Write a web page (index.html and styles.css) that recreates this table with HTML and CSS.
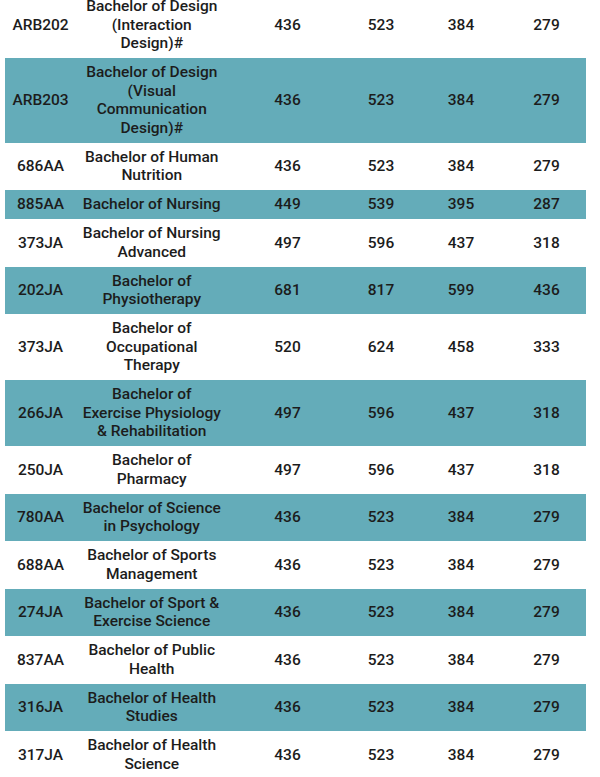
FILE: index.html
```html
<!DOCTYPE html>
<html lang="en">
<head>
<meta charset="utf-8">
<title>Course cut-offs</title>
<link rel="stylesheet" href="styles.css">
</head>
<body>
<div class="wrap">
<table class="scores">
  <colgroup>
    <col class="c-code"><col class="c-name"><col class="c-a"><col class="c-b"><col class="c-c"><col class="c-d">
  </colgroup>
  <tbody>
    <tr><td>ARB202</td><td>Bachelor of Design (Interaction Design)#</td><td>436</td><td>523</td><td>384</td><td>279</td></tr>
    <tr class="alt"><td>ARB203</td><td>Bachelor of Design (Visual Communication Design)#</td><td>436</td><td>523</td><td>384</td><td>279</td></tr>
    <tr><td>686AA</td><td>Bachelor of Human Nutrition</td><td>436</td><td>523</td><td>384</td><td>279</td></tr>
    <tr class="alt"><td>885AA</td><td>Bachelor of Nursing</td><td>449</td><td>539</td><td>395</td><td>287</td></tr>
    <tr><td>373JA</td><td>Bachelor of Nursing Advanced</td><td>497</td><td>596</td><td>437</td><td>318</td></tr>
    <tr class="alt"><td>202JA</td><td>Bachelor of Physiotherapy</td><td>681</td><td>817</td><td>599</td><td>436</td></tr>
    <tr><td>373JA</td><td>Bachelor of Occupational Therapy</td><td>520</td><td>624</td><td>458</td><td>333</td></tr>
    <tr class="alt"><td>266JA</td><td>Bachelor of Exercise Physiology &amp; Rehabilitation</td><td>497</td><td>596</td><td>437</td><td>318</td></tr>
    <tr><td>250JA</td><td>Bachelor of Pharmacy</td><td>497</td><td>596</td><td>437</td><td>318</td></tr>
    <tr class="alt"><td>780AA</td><td>Bachelor of Science in Psychology</td><td>436</td><td>523</td><td>384</td><td>279</td></tr>
    <tr><td>688AA</td><td>Bachelor of Sports Management</td><td>436</td><td>523</td><td>384</td><td>279</td></tr>
    <tr class="alt"><td>274JA</td><td>Bachelor of Sport &amp; Exercise Science</td><td>436</td><td>523</td><td>384</td><td>279</td></tr>
    <tr><td>837AA</td><td>Bachelor of Public Health</td><td>436</td><td>523</td><td>384</td><td>279</td></tr>
    <tr class="alt"><td>316JA</td><td>Bachelor of Health Studies</td><td>436</td><td>523</td><td>384</td><td>279</td></tr>
    <tr><td>317JA</td><td>Bachelor of Health Science</td><td>436</td><td>523</td><td>384</td><td>279</td></tr>
  </tbody>
</table>
</div>
</body>
</html>
```
FILE: styles.css
```css
html, body {
  margin: 0;
  padding: 0;
  background: #ffffff;
}
.wrap {
  padding-left: 5px;
  overflow: hidden;
  height: 777px;
}
.scores {
  margin-top: -8px;
  width: 581px;
  table-layout: fixed;
  border-collapse: collapse;
  font-family: Roboto, "Liberation Sans", sans-serif;
  font-weight: 500;
  font-size: 15.5px;
  line-height: 18.5px;
  color: #1c1c1c;
}
.c-code { width: 71px; }
.c-name { width: 152px; }
.c-a { width: 119px; }
.c-b { width: 68px; }
.c-c { width: 92px; }
.c-d { width: 79px; }
.scores td {
  padding: 5.25px 2px;
  text-align: center;
  vertical-align: middle;
}
.scores td:nth-child(2) {
  padding-left: 6px;
  padding-right: 6.5px;
}
.scores tr.alt {
  background: #64acb9;
}
```
